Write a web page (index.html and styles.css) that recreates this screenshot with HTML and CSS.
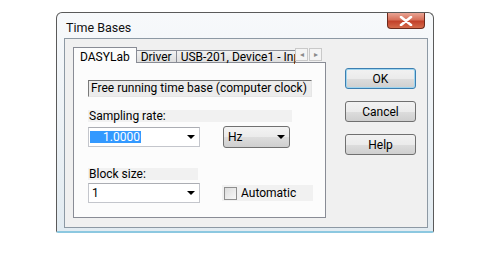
FILE: index.html
```html
<!DOCTYPE html>
<html>
<head>
  <title>Time Bases</title>
  <link rel="stylesheet" href="styles.css">
</head>
<body>
  <div class="window">
    <div class="titlebar">
      <span class="title">Time Bases</span>
      <div class="close">
        <svg width="14" height="10" viewBox="0 0 14 10">
          <path d="M2 1 L12 9 M12 1 L2 9" stroke="#fff" stroke-width="2.6" stroke-linecap="round"/>
        </svg>
      </div>
    </div>

    <div class="client">
      <div class="tabs">
        <div class="tab-strip">
          <div class="tab active">DASYLab</div>
          <div class="tab">Driver</div>
          <div class="tab cut">USB-201, Device1 - Inp</div>
          <div class="tab-scroll">
            <span class="scroll-btn">&#9666;</span>
            <span class="scroll-btn">&#9656;</span>
          </div>
        </div>

        <div class="panel">
          <div class="static">Free running time base (computer clock)</div>

          <div class="label label-wide">Sampling rate:</div>
          <div class="row">
            <div class="combo">
              <span class="selected">1.0000</span>
              <span class="arrow"></span>
            </div>
            <div class="combo-btn">
              <span>Hz</span>
              <span class="arrow"></span>
            </div>
          </div>

          <div class="label label-block">Block size:</div>
          <div class="row row-block">
            <div class="combo">
              <span class="value">1</span>
              <span class="arrow"></span>
            </div>
            <label class="check">
              <span class="box"></span>
              Automatic
            </label>
          </div>
        </div>
      </div>

      <div class="buttons">
        <button class="default">OK</button>
        <button>Cancel</button>
        <button>Help</button>
      </div>
    </div>
  </div>
</body>
</html>
```

FILE: styles.css
```css
* {
  box-sizing: border-box;
}

body {
  margin: 0;
  background: #fff;
  font-family: Roboto, "Liberation Sans", sans-serif;
  font-size: 12px;
  color: #000;
}

.window {
  margin: 12px 0 0 56px;
  width: 378px;
  height: 221px;
  padding: 0 5px 0 7px;
  border: 1px solid #5a5a5a;
  border-bottom: 2px solid #8cc8e0;
  border-radius: 6px 6px 2px 2px;
  background: linear-gradient(to bottom, #f7f9fb 0%, #edf2f6 50%, #e2ebf1 100%);
  display: flex;
  flex-direction: column;
}

.titlebar {
  flex-shrink: 0;
  height: 25px;
  display: flex;
  justify-content: space-between;
  align-items: flex-start;
}

.title {
  margin: 7px 0 0 2px;
  font-size: 12.5px;
  color: #111;
}

.close {
  width: 38px;
  height: 16px;
  margin-right: 3px;
  border: 1px solid #6b2a1c;
  border-top: none;
  border-radius: 0 0 4px 4px;
  background: linear-gradient(to bottom, #e9a494 0%, #d6705a 45%, #c2412a 55%, #d46a4a 100%);
  display: flex;
  align-items: center;
  justify-content: center;
}

.client {
  flex: 1;
  margin-bottom: 3px;
  border: 1px solid #8d99a4;
  background: #f0f0f0;
  display: flex;
  padding: 8px 0 0 8px;
}

/* tab control */

.tabs {
  width: 253px;
}

.tab-strip {
  height: 15px;
  display: flex;
  align-items: flex-end;
  position: relative;
}

.tab {
  height: 12px;
  padding: 0 4px;
  border: 1px solid #898c95;
  border-bottom: none;
  background: linear-gradient(to bottom, #f2f2f2, #dedede);
  line-height: 13px;
  white-space: nowrap;
  margin-left: -1px;
}

.tab.active {
  height: 16px;
  margin: 0 0 -1px 0;
  padding: 2px 6px 0;
  background: #fcfcfc;
  line-height: 14px;
  position: relative;
  z-index: 1;
}

.tab.cut {
  width: 120px;
  overflow-x: clip;
  overflow-y: visible;
}

.tab-scroll {
  position: absolute;
  left: 222px;
  top: 1px;
  display: flex;
  gap: 1px;
}

.scroll-btn {
  width: 13px;
  height: 13px;
  border: 1px solid #c9c9c9;
  background: #f4f4f4;
  color: #8a8a8a;
  font-size: 8px;
  line-height: 11px;
  text-align: center;
}

.panel {
  height: 156px;
  border: 1px solid #898c95;
  background: #fcfcfc;
  padding: 17px 0 0 14px;
}

.static {
  width: 224px;
  height: 17px;
  border: 1px solid #9a9a9a;
  border-top-color: #6e6e6e;
  border-left-color: #7a7a7a;
  border-bottom-color: #e6e6e6;
  border-right-color: #e6e6e6;
  background: #ececec;
  line-height: 15px;
  padding-left: 2px;
}

.label {
  margin-top: 13px;
  height: 12px;
  line-height: 13px;
  background: #f1f1f1;
  padding-left: 1px;
}

.label-wide {
  width: 204px;
}

.label-block {
  width: 110px;
  margin-top: 20px;
}

.row {
  margin-top: 4px;
  height: 22px;
  display: flex;
  align-items: center;
}

.row-block {
  margin-top: 3px;
  height: 20px;
}

.combo {
  width: 112px;
  height: 20px;
  border: 1px solid #c4c6cc;
  border-top-color: #abadb3;
  background: #fff;
  display: flex;
  align-items: center;
  justify-content: space-between;
}

.selected {
  margin-left: 1px;
  padding: 0 1px 0 13px;
  height: 12px;
  line-height: 12px;
  background: #3399ff;
  color: #fff;
}

.value {
  margin-left: 3px;
}

.arrow {
  width: 0;
  height: 0;
  margin-right: 4px;
  border-left: 4px solid transparent;
  border-right: 4px solid transparent;
  border-top: 4px solid #000;
}

.combo-btn {
  margin-left: 23px;
  width: 67px;
  height: 22px;
  padding: 0 3px 0 4px;
  border: 1px solid #707070;
  border-radius: 3px;
  background: linear-gradient(to bottom, #f3f3f3 0%, #ebebeb 50%, #dddddd 51%, #cfcfcf 100%);
  display: flex;
  align-items: center;
  justify-content: space-between;
}

.combo-btn .arrow {
  margin-right: 1px;
}

.check {
  margin-left: 22px;
  width: 91px;
  height: 16px;
  background: #f1f1f1;
  display: flex;
  align-items: center;
  gap: 4px;
}

.box {
  margin-left: 2px;
  width: 13px;
  height: 13px;
  border: 1px solid #8f8f8f;
  background: linear-gradient(135deg, #dcdcdc, #f8f8f8);
}

/* dialog buttons */

.buttons {
  margin-left: 19px;
  padding-top: 21px;
  display: flex;
  flex-direction: column;
  gap: 12px;
}

button {
  width: 71px;
  height: 21px;
  padding: 0;
  border: 1px solid #707070;
  border-radius: 3px;
  background: linear-gradient(to bottom, #f2f2f2 0%, #ebebeb 50%, #dddddd 51%, #cfcfcf 100%);
  font-family: Roboto, "Liberation Sans", sans-serif;
  font-size: 12px;
  color: #000;
}

button.default {
  border-color: #3c7fb1;
  box-shadow: inset 0 0 0 1px #9fd5ef;
}
```
